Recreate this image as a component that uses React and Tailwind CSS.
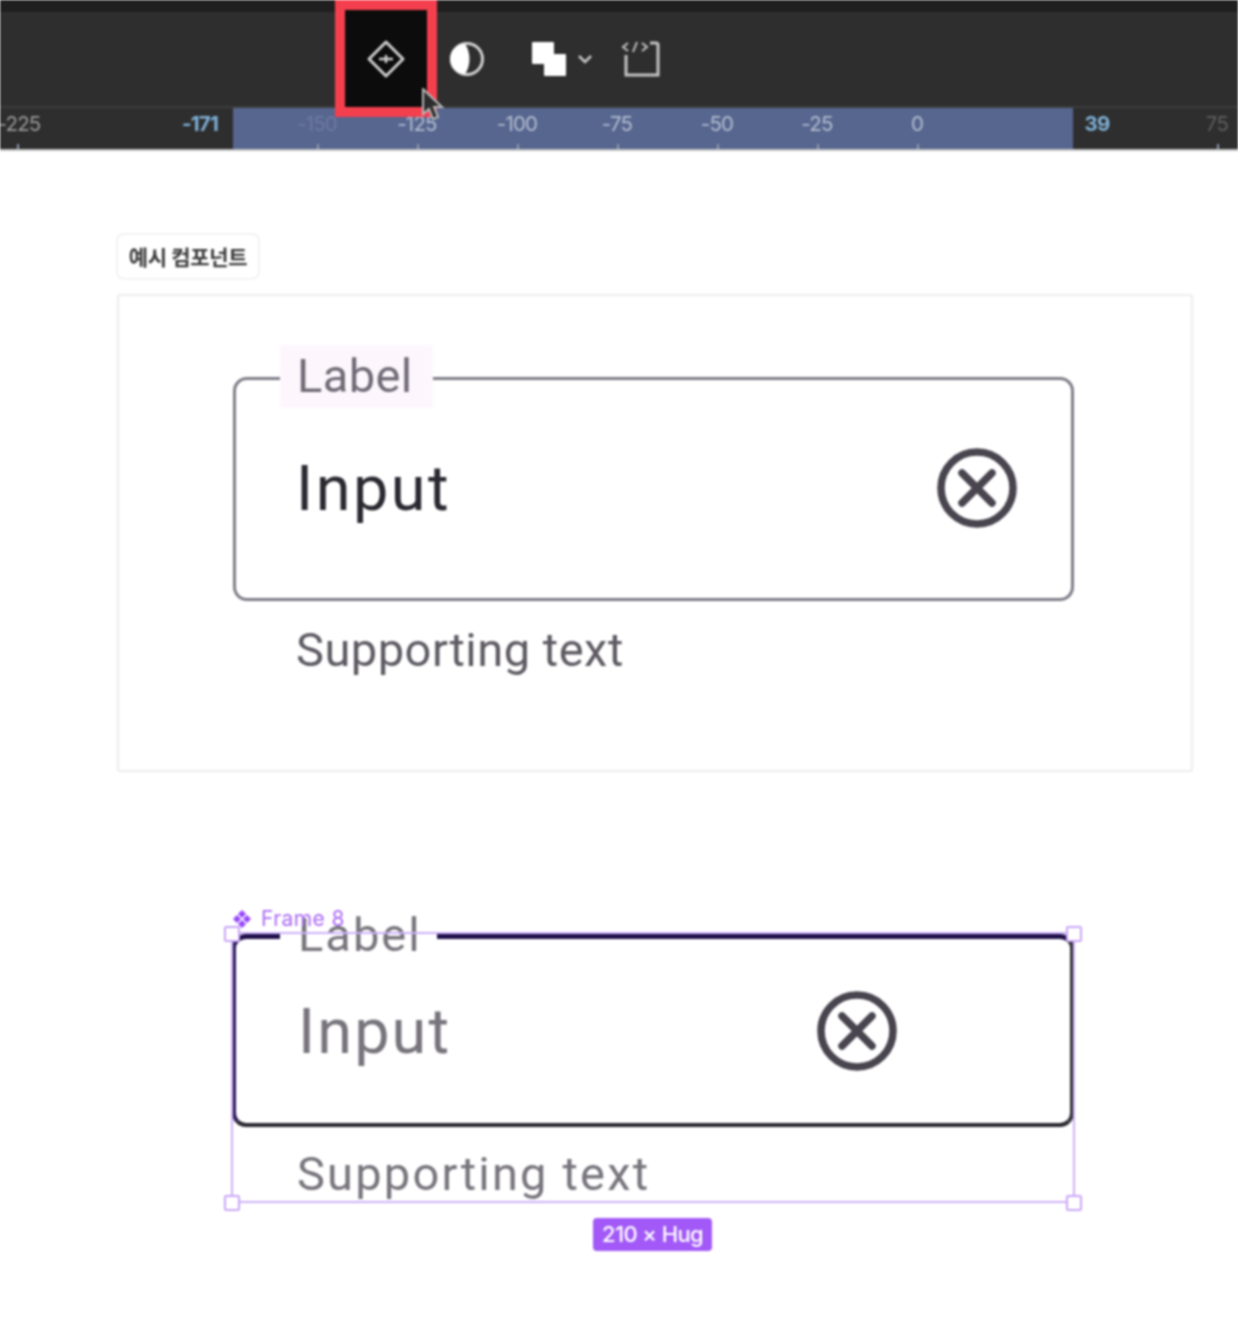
const RULER_MARKS = [
  { x: 19, tick: 17, label: "-225", className: "text-[#9a9a9a]" },
  { x: 200, label: "-171", className: "text-[#7fb0d6] font-bold" },
  { x: 317, tick: 317, label: "-150", className: "text-[#6d7a9e]" },
  { x: 417, tick: 417, label: "-125", className: "text-[#b4bccf]" },
  { x: 517, tick: 517, label: "-100", className: "text-[#b4bccf]" },
  { x: 617, tick: 617, label: "-75", className: "text-[#b4bccf]" },
  { x: 717, tick: 717, label: "-50", className: "text-[#b4bccf]" },
  { x: 817, tick: 817, label: "-25", className: "text-[#b4bccf]" },
  { x: 917, tick: 917, label: "0", className: "text-[#b4bccf]" },
  { x: 1097, label: "39", className: "text-[#7fb0d6] font-bold" },
  { x: 1217, tick: 1217, label: "75", className: "text-[#5f5f5f]" },
];

function ClearIcon() {
  return (
    <svg width="82" height="82" viewBox="0 0 82 82" fill="none" stroke="#49454f" strokeWidth="7.5" className="shrink-0">
      <circle cx="41" cy="41" r="36" />
      <path d="M26 26 L56 56 M56 26 L26 56" strokeLinecap="round" />
    </svg>
  );
}

function Handle({ className }) {
  return <div className={`absolute w-4 h-4 bg-white border-2 border-[#c9a6f7] rounded-[2px] ${className}`} />;
}

function Toolbar() {
  return (
    <div className="h-[108px] bg-[#2e2e2e] border-t-[12px] border-t-[#1f1f1f] border-b-2 border-b-[#3c3c3c] flex items-start pl-[335px]">
      <div className="relative z-10 -mt-[12px] w-[102px] h-[117px] border-[10px] border-[#f43f4e] bg-[#0c0c0c] flex items-center justify-center shrink-0">
        <svg width="40" height="40" viewBox="0 0 40 40" fill="none" stroke="#cfcfcf" strokeWidth="3">
          <path d="M20 3 L37 20 L20 37 L3 20 Z" strokeLinejoin="round" />
          <path d="M13 20 H27 M20 16 V24" strokeWidth="2.5" />
        </svg>
      </div>
      <div className="flex items-center h-[95px] pb-[2px]">
        <svg width="36" height="36" viewBox="0 0 36 36" className="ml-[12px]">
          <circle cx="18" cy="18" r="15.5" fill="none" stroke="#d2d2d2" strokeWidth="3" />
          <path d="M16 3 A15 15 0 0 0 16 33 C22 25 22 11 16 3 Z" fill="#ffffff" />
        </svg>
        <svg width="36" height="36" viewBox="0 0 36 36" className="ml-[46px]">
          <rect x="1" y="1" width="22" height="22" rx="1" fill="#ffffff" />
          <rect x="13" y="13" width="22" height="22" rx="1" fill="#ffffff" />
        </svg>
        <svg width="16" height="10" viewBox="0 0 16 10" fill="none" stroke="#c8c8c8" strokeWidth="2.5" className="ml-[10px]">
          <path d="M2 2 L8 8 L14 2" />
        </svg>
        <svg width="40" height="38" viewBox="0 0 40 38" fill="none" stroke="#c4c4c4" strokeWidth="3" className="ml-[28px]">
          <path d="M5 15 V35 H37 V5 Q37 3 35 3 H29" />
          <path d="M7 3 L2 7 L7 11 M21 3 L26 7 L21 11 M16 2 L12 12" strokeWidth="2" />
        </svg>
      </div>
    </div>
  );
}

function Ruler() {
  return (
    <div className="relative h-[43px] bg-[#2e2e2e] border-b-2 border-b-[#c4c4c4] overflow-hidden font-['Inter',sans-serif] text-[20.5px] tracking-[-0.8px]">
      <div className="absolute left-[233px] top-0 bottom-0 w-[840px] bg-[#56668f]" />
      {RULER_MARKS.map((m) => (
        <span key={m.label} style={{ left: m.x }} className={`absolute top-[4px] -translate-x-1/2 leading-[24px] ${m.className}`}>
          {m.label}
        </span>
      ))}
      {RULER_MARKS.filter((m) => m.tick).map((m) => (
        <span key={m.tick} style={{ left: m.tick }} className="absolute bottom-0 w-[2px] h-[5px] bg-[#8f97ab]" />
      ))}
    </div>
  );
}

function ExampleField() {
  return (
    <div className="w-[841px]">
      <div className="relative h-[224px] border-[3px] border-[#7f7c87] rounded-[14px] flex items-center justify-between pl-[60px] pr-[53px]">
        <div className="absolute left-[44px] -top-[35px] h-[63px] w-[153px] bg-[#fdf7fd] pl-[17px] text-[47px] leading-[62px] tracking-[0.4px] text-[#6f6a75]">
          Label
        </div>
        <span className="text-[63px] leading-none tracking-[2.5px] text-[#2a2830] -translate-y-[1px]">Input</span>
        <div className="-translate-y-[1px]">
          <ClearIcon />
        </div>
      </div>
      <p className="pl-[63px] mt-[19px] text-[47px] leading-[60px] tracking-[0.5px] text-[#5d5a62]">Supporting text</p>
    </div>
  );
}

function SelectedField() {
  return (
    <div className="relative w-[842px] h-[269px]">
      <div className="relative h-[193px] border-[4px] border-t-[5px] border-t-[#20114a] border-l-[#2f1e57] border-r-[#333339] border-b-[#2a282e] rounded-[14px] flex items-center justify-between pl-[62px] pr-[172px]">
        <div className="absolute left-[44px] -top-[34px] h-[60px] w-[157px] bg-white pl-[18px] text-[47px] leading-[60px] tracking-[2px] text-[#77747c]">
          Label
        </div>
        <span className="text-[63px] leading-none tracking-[2.1px] text-[#77747c]">Input</span>
        <ClearIcon />
      </div>
      <p className="pl-[65px] mt-[17px] text-[47px] leading-[60px] tracking-[2.2px] text-[#77747c]">Supporting text</p>

      {/* selection overlay */}
      <div className="absolute -inset-x-[1px] -top-[2px] bottom-0 border-2 border-[#cdb0f8]" />
      <Handle className="-left-[8px] -top-[8px]" />
      <Handle className="-right-[8px] -top-[8px]" />
      <Handle className="-left-[8px] -bottom-[8px]" />
      <Handle className="-right-[8px] -bottom-[8px]" />
      <div className="absolute left-0 -top-[28px] flex items-center gap-[9px] text-[21px] leading-[26px] tracking-[0.4px] text-[#ab6af5] font-['Inter',sans-serif]">
        <svg width="20" height="20" viewBox="0 0 20 20" fill="#9747ff">
          <path d="M10 1 L14 5 L10 9 L6 5 Z M10 11 L14 15 L10 19 L6 15 Z M5 6 L9 10 L5 14 L1 10 Z M15 6 L19 10 L15 14 L11 10 Z" />
        </svg>
        <span>Frame 8</span>
      </div>
      <div className="absolute left-[361px] -bottom-[48px] h-[33px] w-[119px] rounded-[4px] bg-[#a259f7] text-white text-[22px] leading-[33px] tracking-[-0.6px] font-medium text-center font-['Inter',sans-serif]">
        210 × Hug
      </div>
    </div>
  );
}

export default function App() {
  return (
    <div className="relative w-[1238px] h-[1326px] bg-white overflow-hidden font-['Roboto',sans-serif] blur-[0.8px]">
      <Toolbar />
      <Ruler />

      {/* cursor */}
      <svg width="26" height="36" viewBox="0 0 26 36" className="absolute left-[421px] top-[88px] z-20">
        <path d="M2 1 V26 L8 21 L12 31 L17 29 L13 19 L21 19 Z" fill="#2c2c2c" stroke="#b8b8b8" strokeWidth="2" />
      </svg>

      <div className="pl-[116px] pt-[82px]">
        <div className="w-[144px] h-[47px] border-2 border-[#f3f3f3] rounded-[8px] flex items-center justify-center text-[21px] font-bold tracking-[-0.3px] text-[#3a3a3a] font-['Noto_Sans_CJK_KR',sans-serif]">
          예시 컴포넌트
        </div>

        <div className="w-[1076px] h-[478px] ml-[1px] mt-[14px] border-2 border-[#ececec] rounded-[3px] pl-[114px] pt-[81px]">
          <ExampleField />
        </div>

        <div className="ml-[116px] mt-[162px]">
          <SelectedField />
        </div>
      </div>
    </div>
  );
}
